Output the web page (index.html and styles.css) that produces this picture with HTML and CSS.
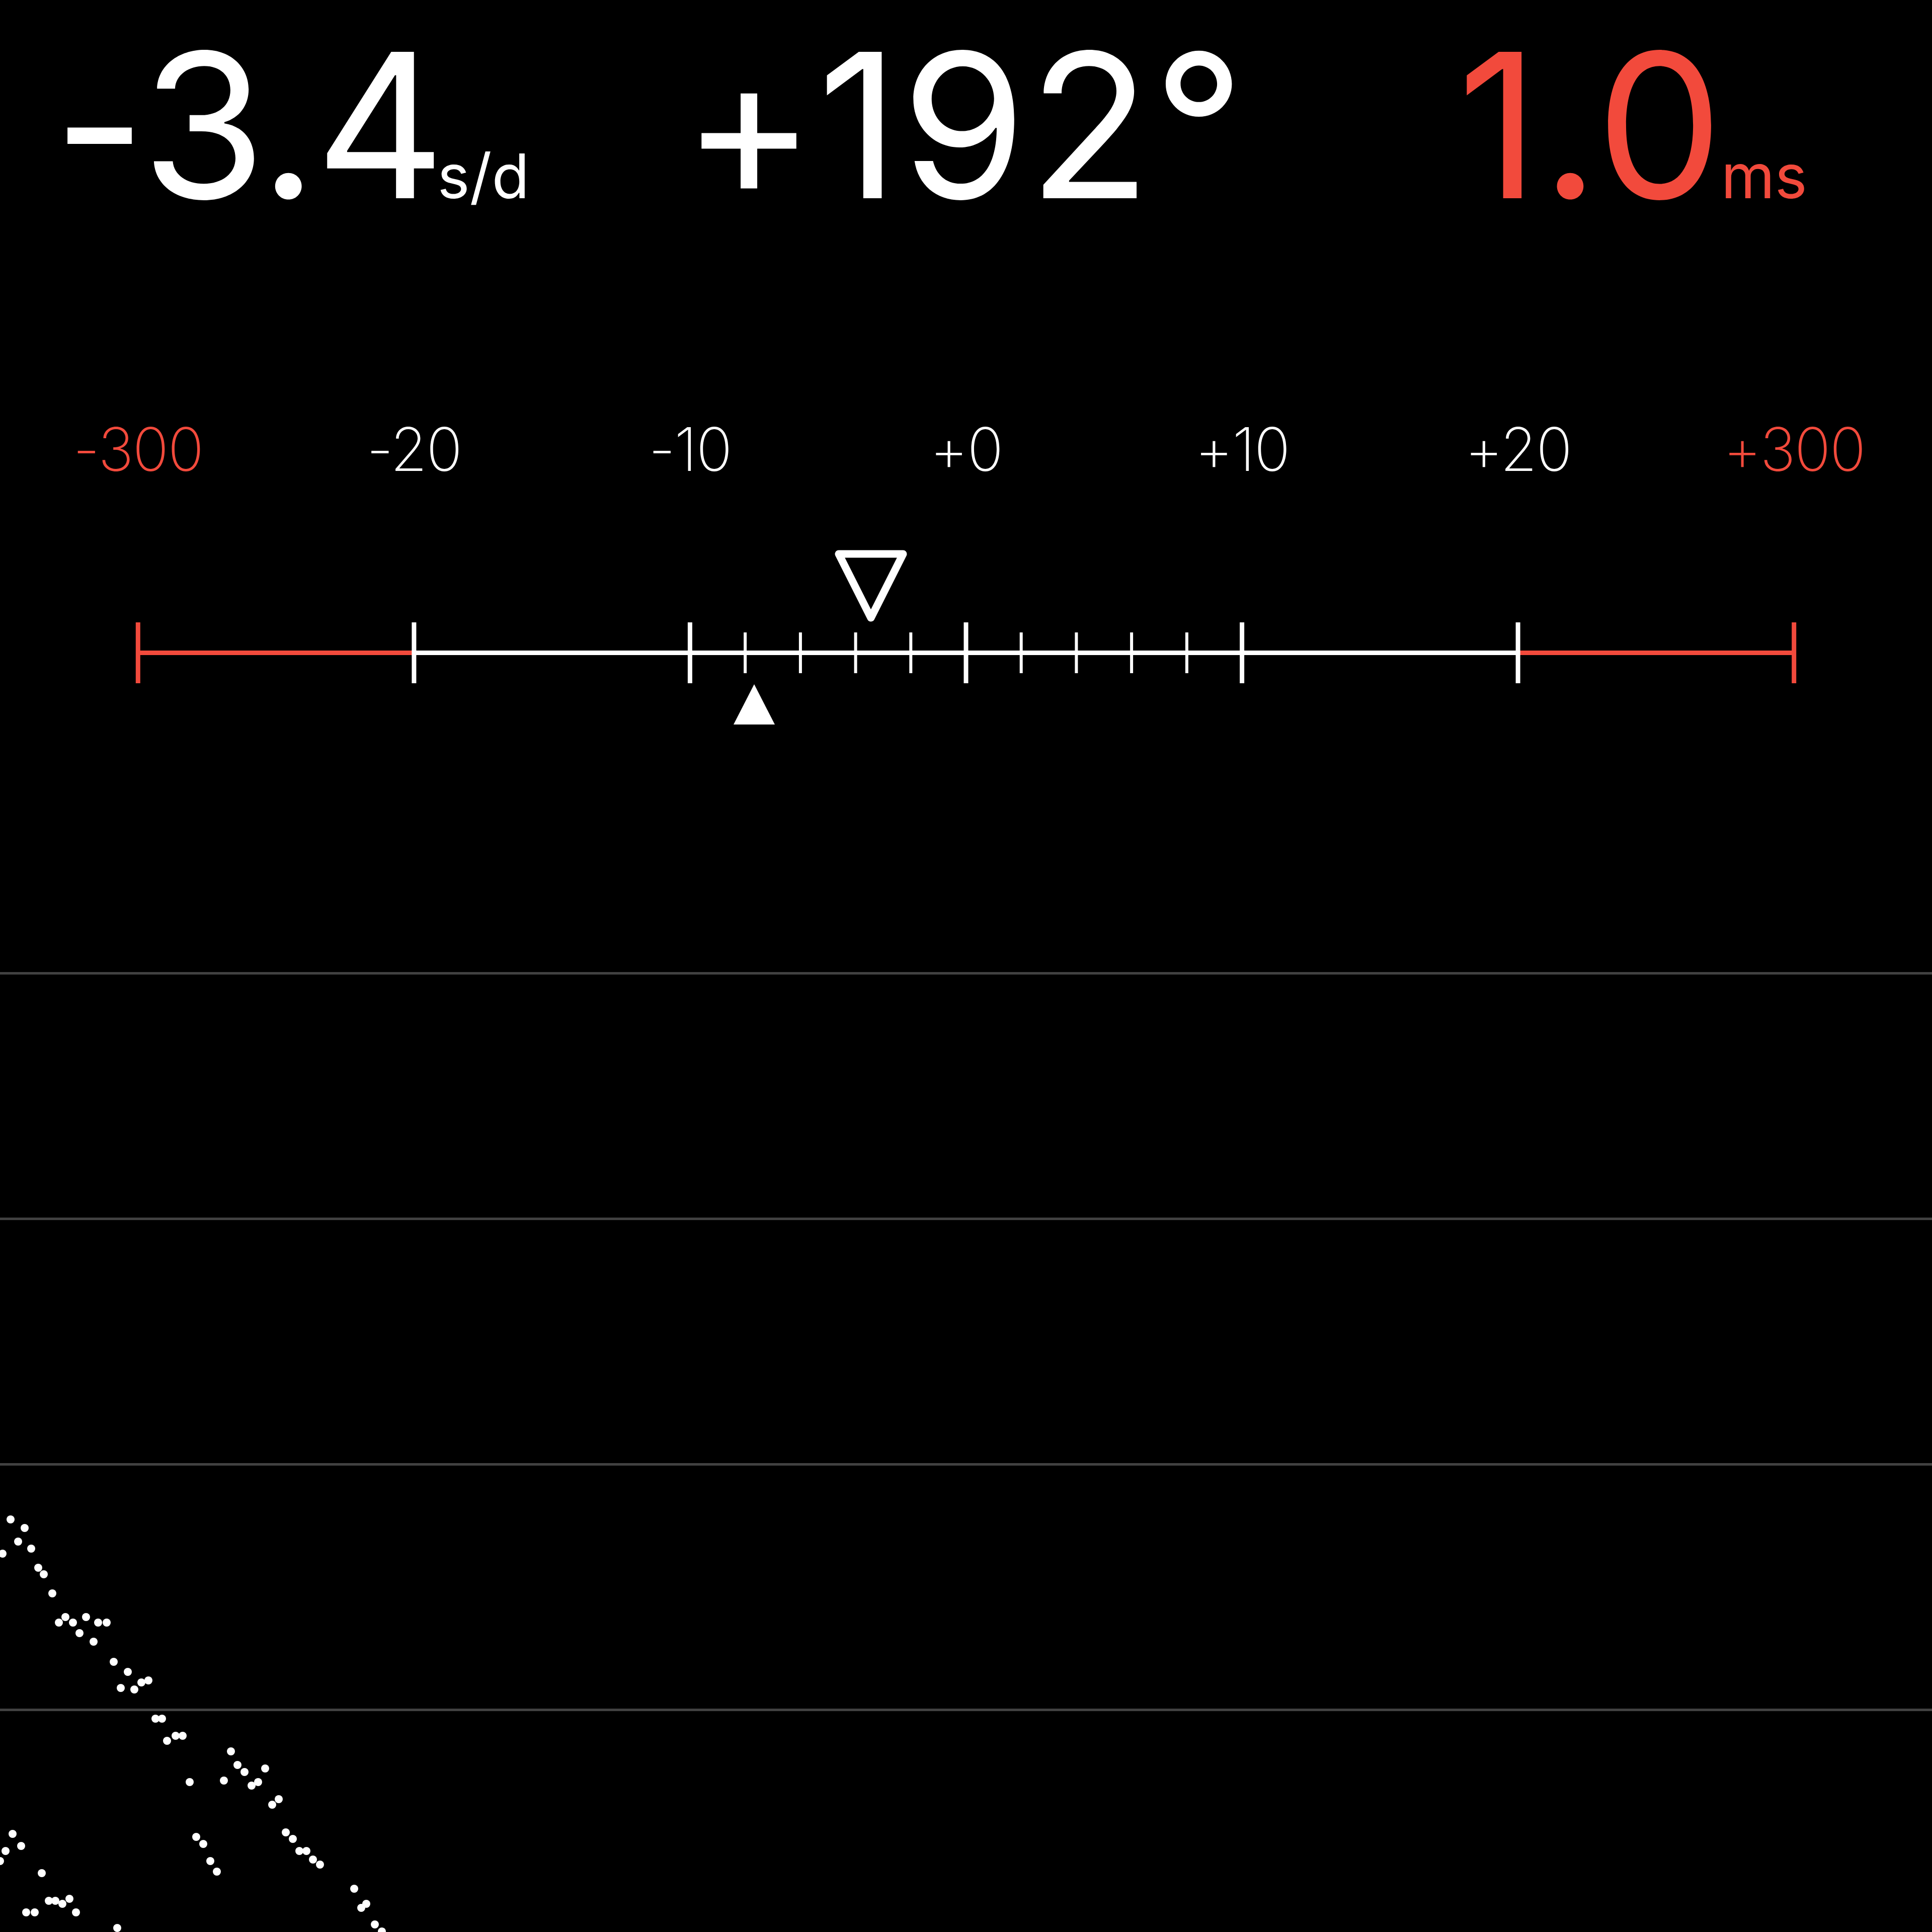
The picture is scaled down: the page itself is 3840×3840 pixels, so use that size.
FILE: index.html
```html
<!DOCTYPE html>
<html lang="en">
<head>
<meta charset="utf-8">
<title>Timegrapher</title>
<link rel="stylesheet" href="styles.css">
</head>
<body>
<div class="screen">
  <header class="readouts">
    <div class="reading rate">-3.4<span class="unit">s/d</span></div>
    <div class="reading angle">+192°</div>
    <div class="reading beat alert">1.0<span class="unit">ms</span></div>
  </header>

  <div class="scale-labels">
    <span class="alert">-300</span>
    <span>-20</span>
    <span>-10</span>
    <span>+0</span>
    <span>+10</span>
    <span>+20</span>
    <span class="alert">+300</span>
  </div>

  <svg class="gauge" viewBox="0 0 3840 400" width="3840" height="400">
    <g class="axis">
      <line class="seg-red" x1="274.3" y1="217.5" x2="822.9" y2="217.5"/>
      <line class="seg-white" x1="822.9" y1="217.5" x2="3017.1" y2="217.5"/>
      <line class="seg-red" x1="3017.1" y1="217.5" x2="3565.7" y2="217.5"/>
    </g>
    <g class="major">
      <line class="tick-red" x1="274.3" y1="157" x2="274.3" y2="278"/>
      <line x1="822.9" y1="157" x2="822.9" y2="278"/>
      <line x1="1371.4" y1="157" x2="1371.4" y2="278"/>
      <line x1="1920" y1="157" x2="1920" y2="278"/>
      <line x1="2468.6" y1="157" x2="2468.6" y2="278"/>
      <line x1="3017.1" y1="157" x2="3017.1" y2="278"/>
      <line class="tick-red" x1="3565.7" y1="157" x2="3565.7" y2="278"/>
    </g>
    <g class="minor">
      <line x1="1481.1" y1="177" x2="1481.1" y2="258"/>
      <line x1="1590.9" y1="177" x2="1590.9" y2="258"/>
      <line x1="1700.6" y1="177" x2="1700.6" y2="258"/>
      <line x1="1810.3" y1="177" x2="1810.3" y2="258"/>
      <line x1="2029.7" y1="177" x2="2029.7" y2="258"/>
      <line x1="2139.4" y1="177" x2="2139.4" y2="258"/>
      <line x1="2249.1" y1="177" x2="2249.1" y2="258"/>
      <line x1="2358.9" y1="177" x2="2358.9" y2="258"/>
    </g>
    <polygon class="marker-rate" points="1667,21 1795,21 1731,148"/>
    <polygon class="marker-avg" points="1458,360 1540,360 1499,280"/>
  </svg>

  <section class="chart">
    <div class="band"></div>
    <div class="band"></div>
    <div class="band"></div>
    <div class="band"></div>
    <svg class="dots" viewBox="0 1932 3840 1908" width="3840" height="1908">
      <circle cx="5" cy="3088" r="8"/><circle cx="21" cy="3020" r="8"/><circle cx="36" cy="3064" r="8"/>
      <circle cx="49" cy="3037" r="8"/><circle cx="62" cy="3078" r="8"/><circle cx="76" cy="3116" r="8"/>
      <circle cx="87" cy="3129" r="8"/><circle cx="104" cy="3167" r="8"/><circle cx="117" cy="3225" r="8"/>
      <circle cx="130" cy="3214" r="8"/><circle cx="145" cy="3225" r="8"/><circle cx="158" cy="3246" r="8"/>
      <circle cx="171" cy="3214" r="8"/><circle cx="186" cy="3263" r="8"/><circle cx="195" cy="3225" r="8"/>
      <circle cx="212" cy="3225" r="8"/><circle cx="226" cy="3303" r="8"/><circle cx="240" cy="3355" r="8"/>
      <circle cx="254" cy="3323" r="8"/><circle cx="267" cy="3358" r="8"/><circle cx="281" cy="3344" r="8"/>
      <circle cx="295" cy="3340" r="8"/><circle cx="309" cy="3416" r="8"/><circle cx="322" cy="3416" r="8"/>
      <circle cx="332" cy="3460" r="8"/><circle cx="349" cy="3450" r="8"/><circle cx="363" cy="3450" r="8"/>
      <circle cx="377" cy="3542" r="8"/><circle cx="445" cy="3539" r="8"/><circle cx="459" cy="3481" r="8"/>
      <circle cx="472" cy="3508" r="8"/><circle cx="486" cy="3522" r="8"/><circle cx="500" cy="3549" r="8"/>
      <circle cx="513" cy="3542" r="8"/><circle cx="527" cy="3515" r="8"/><circle cx="541" cy="3587" r="8"/>
      <circle cx="554" cy="3576" r="8"/><circle cx="568" cy="3642" r="8"/><circle cx="582" cy="3655" r="8"/>
      <circle cx="595" cy="3679" r="8"/><circle cx="609" cy="3679" r="8"/><circle cx="622" cy="3696" r="8"/>
      <circle cx="636" cy="3706" r="8"/><circle cx="704" cy="3754" r="8"/><circle cx="718" cy="3792" r="8"/>
      <circle cx="728" cy="3784" r="8"/><circle cx="745" cy="3825" r="8"/><circle cx="759" cy="3839" r="8"/>
      <circle cx="0" cy="3699" r="8"/><circle cx="11" cy="3679" r="8"/><circle cx="25" cy="3645" r="8"/>
      <circle cx="42" cy="3669" r="8"/><circle cx="83" cy="3723" r="8"/><circle cx="52" cy="3801" r="8"/>
      <circle cx="69" cy="3801" r="8"/><circle cx="97" cy="3778" r="8"/><circle cx="110" cy="3778" r="8"/>
      <circle cx="124" cy="3784" r="8"/><circle cx="138" cy="3774" r="8"/><circle cx="151" cy="3801" r="8"/>
      <circle cx="233" cy="3832" r="8"/>
      <circle cx="390" cy="3651" r="8"/><circle cx="404" cy="3665" r="8"/><circle cx="418" cy="3699" r="8"/>
      <circle cx="431" cy="3720" r="8"/>
    </svg>
  </section>
</div>
</body>
</html>
```

FILE: styles.css
```css
html, body {
  margin: 0;
  padding: 0;
  background: #000;
}

.screen {
  width: 3840px;
  height: 3840px;
  overflow: hidden;
  background: #000;
  color: #fff;
}

.alert {
  color: #f24a3c;
}

/* Top readouts */
.readouts {
  display: grid;
  grid-template-columns: repeat(3, 1fr);
  height: 800px;
  box-sizing: border-box;
  padding-top: 48px;
  font-family: Inter, Roboto, sans-serif;
  font-size: 400px;
  line-height: 400px;
  font-weight: 400;
  letter-spacing: 4px;
}

.reading {
  white-space: nowrap;
}

.rate {
  justify-self: start;
  padding-left: 106px;
  letter-spacing: -4px;
}

.angle {
  justify-self: center;
  margin-left: -6px;
}

.beat {
  justify-self: end;
  padding-right: 248px;
}

.unit {
  font-family: Inter, Roboto, sans-serif;
  font-weight: 400;
  font-size: 122px;
  letter-spacing: 0;
}

.rate .unit {
  margin-left: -12px;
}

.beat .unit {
  margin-left: -8px;
}

/* Scale labels */
.scale-labels {
  display: grid;
  grid-template-columns: repeat(7, 1fr);
  height: 280px;
  box-sizing: border-box;
  padding-top: 34px;
  font-family: Inter, Roboto, sans-serif;
  font-weight: 200;
  font-size: 119px;
  line-height: 119px;
  letter-spacing: -2px;
  text-align: center;
}

/* Gauge */
.gauge {
  display: block;
  width: 3840px;
  height: 400px;
}

.axis line {
  stroke-width: 9;
}

.seg-red {
  stroke: #f24a3c;
}

.seg-white {
  stroke: #fff;
}

.major line {
  stroke: #fff;
  stroke-width: 9;
}

.major .tick-red {
  stroke: #f24a3c;
}

.minor line {
  stroke: #fff;
  stroke-width: 6;
}

.marker-rate {
  fill: none;
  stroke: #fff;
  stroke-width: 15;
  stroke-linejoin: round;
}

.marker-avg {
  fill: #fff;
}

/* Chart */
.chart {
  position: relative;
  margin-top: 452px;
  height: 1908px;
}

.band {
  height: 488px;
  box-sizing: border-box;
  border-top: 5px solid #414141;
}

.dots {
  position: absolute;
  left: 0;
  top: 0;
  width: 3840px;
  height: 1908px;
  fill: #fff;
}
```
